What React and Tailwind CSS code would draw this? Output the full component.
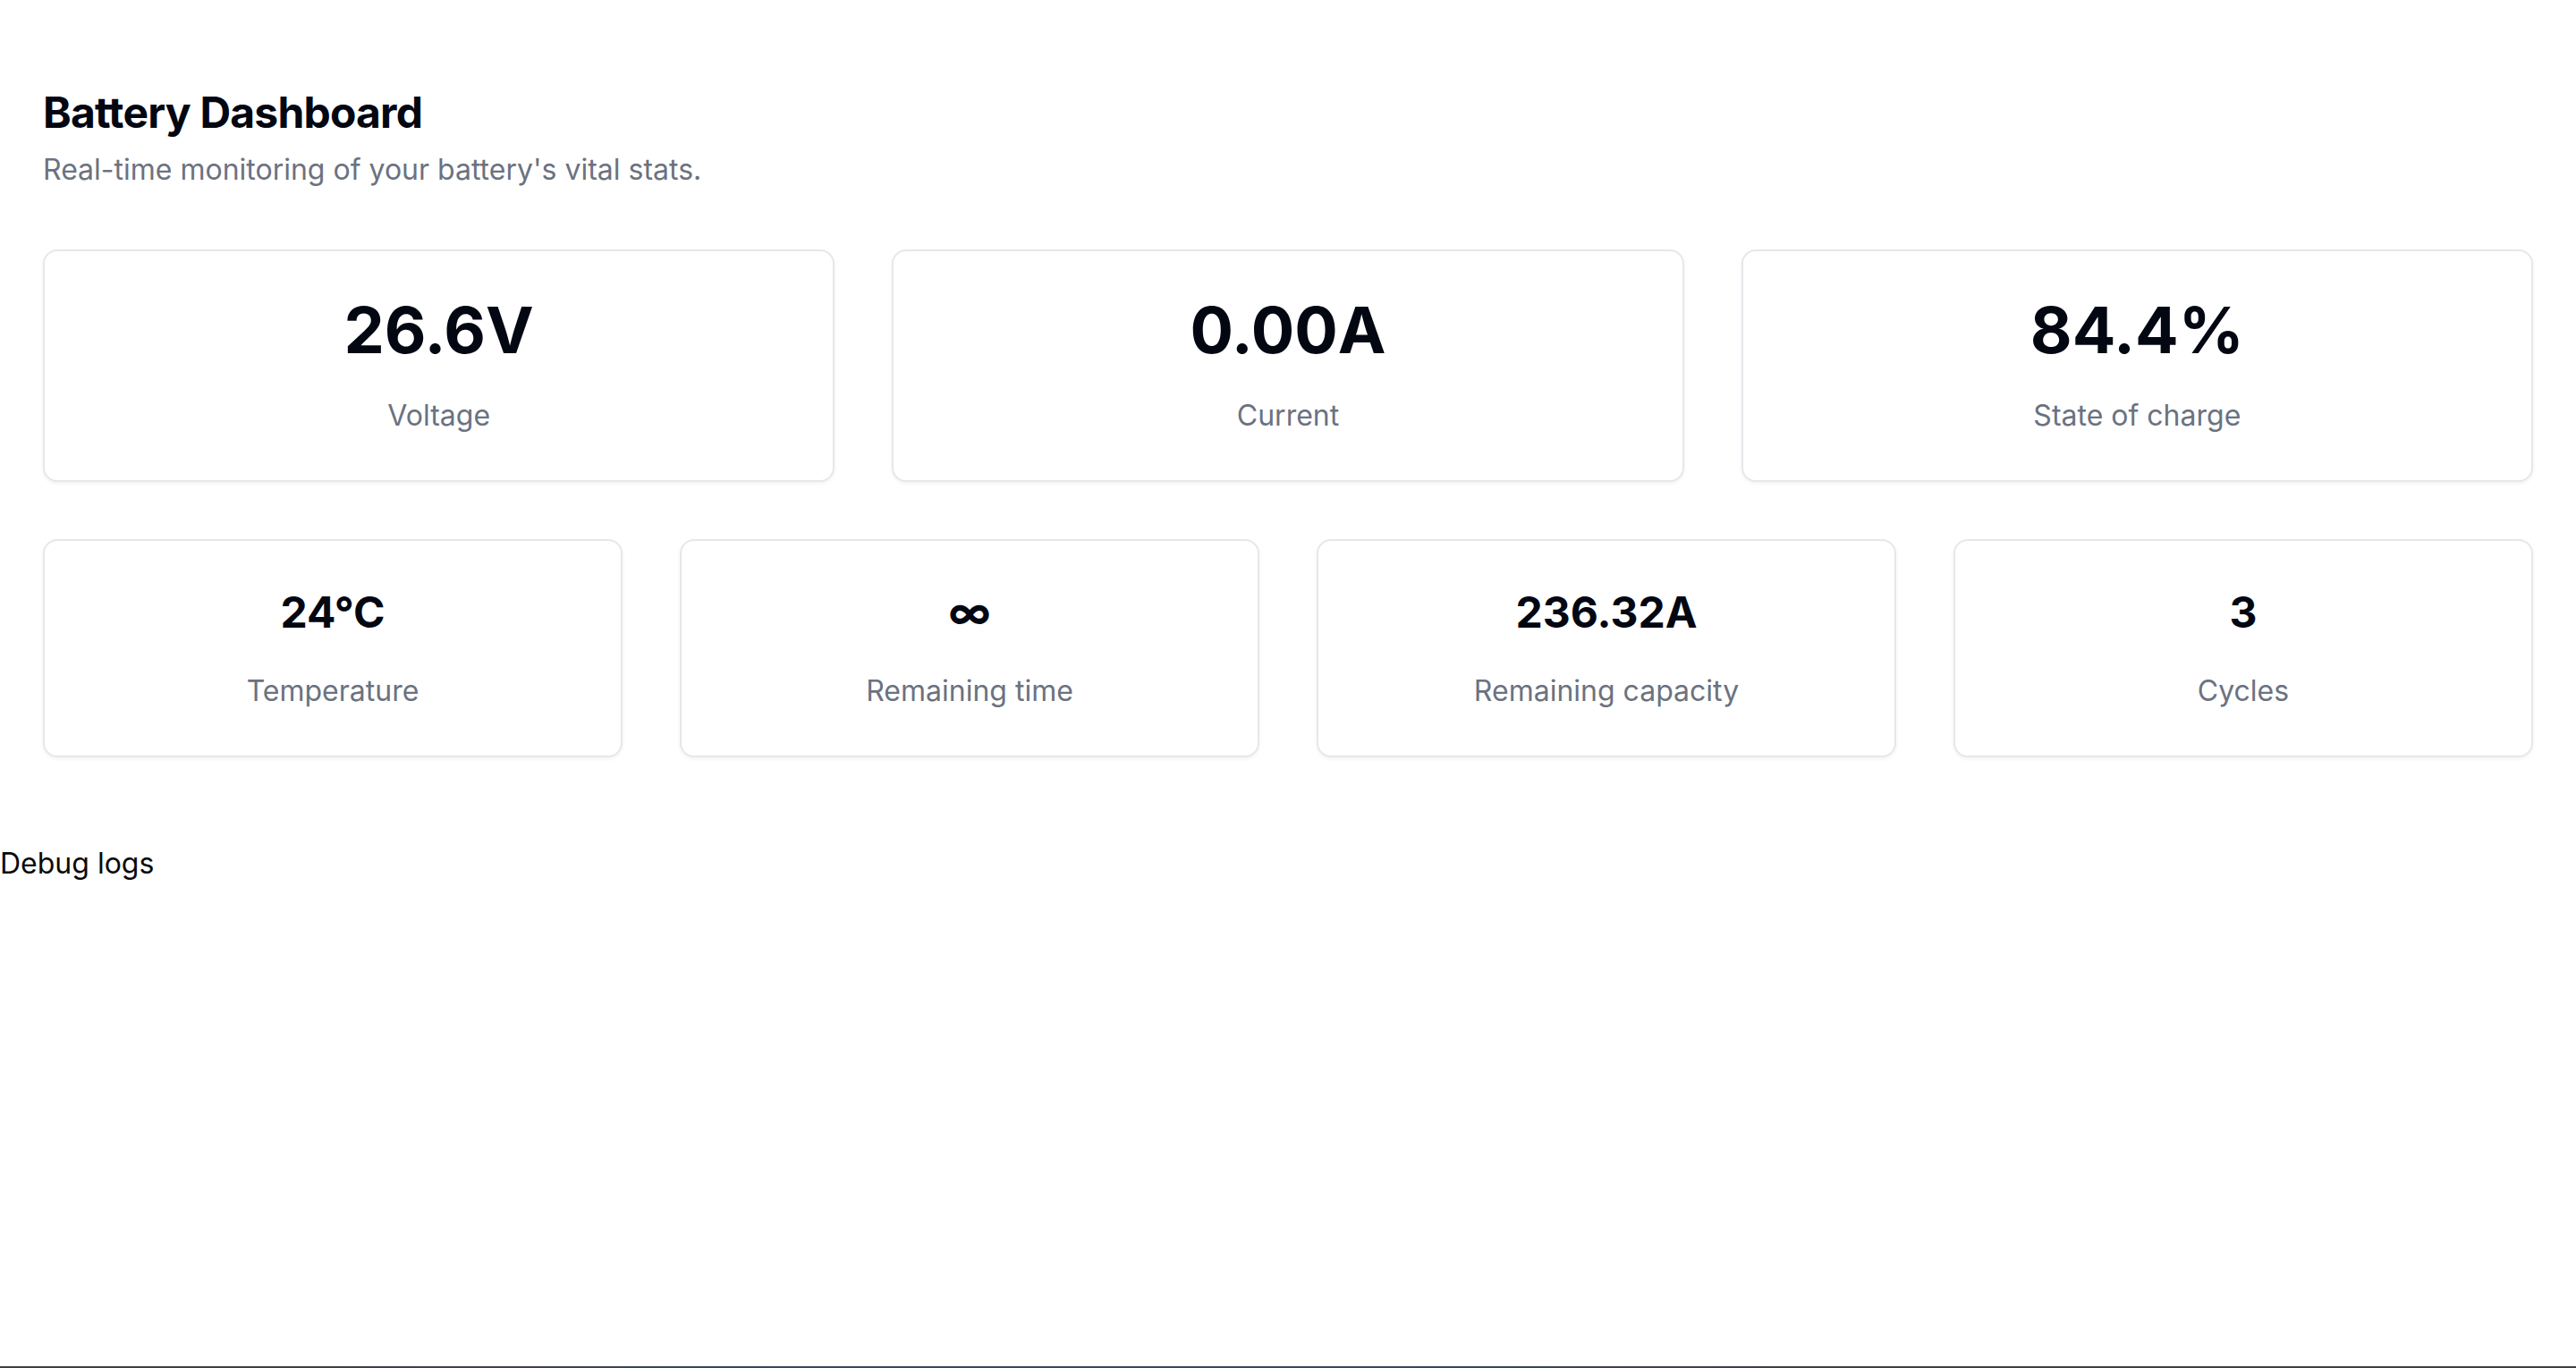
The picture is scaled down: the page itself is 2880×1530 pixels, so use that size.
import React from "react";

const top = [
  { v: "26.6V", l: "Voltage" },
  { v: "0.00A", l: "Current" },
  { v: "84.4%", l: "State of charge" },
];
const bottom = [
  { v: "24°C", l: "Temperature" },
  { v: "∞", l: "Remaining time" },
  { v: "236.32A", l: "Remaining capacity" },
  { v: "3", l: "Cycles" },
];

function Card({ v, l, big }) {
  return (
    <div className="rounded-[16px] border-2 border-[#e5e7eb] bg-white p-[48px] text-center shadow-[0_2px_4px_0_rgba(0,0,0,0.05)]">
      <div
        className={
          big
            ? "text-[72px] leading-[80px] font-bold text-[#030712]"
            : "text-[48px] leading-[64px] font-bold text-[#030712]"
        }
      >
        {v}
      </div>
      <div className="mt-[32px] text-[32px] leading-[48px] text-[#6b7280]">{l}</div>
    </div>
  );
}

export default function App() {
  return (
    <div className="min-h-screen bg-white" style={{ fontFamily: "Inter, 'Noto Sans', sans-serif" }}>
      <div className="px-[48px] pt-[94px]">
        <h1 className="text-[48px] leading-[64px] font-bold tracking-[-0.8px] text-[#030712]">
          Battery Dashboard
        </h1>
        <p className="mt-[8px] text-[32px] leading-[48px] text-[#6b7280]">
          Real-time monitoring of your battery's vital stats.
        </p>
        <div className="mt-[65px] grid grid-cols-3 gap-[64px]">
          {top.map((c) => (
            <Card key={c.l} {...c} big />
          ))}
        </div>
        <div className="mt-[64px] grid grid-cols-4 gap-[64px]">
          {bottom.map((c) => (
            <Card key={c.l} {...c} />
          ))}
        </div>
      </div>
      <div className="mt-[95px] text-[32px] leading-[48px] text-[#0a0a0a]">Debug logs</div>
      <div className="mt-[538px] h-[200px] bg-[linear-gradient(90deg,#3f3f46_0%,#3f3f46_12%,#3b4564_30%,#3b4564_55%,#3f3f46_70%,#3f3f46_100%)]" />
    </div>
  );
}
